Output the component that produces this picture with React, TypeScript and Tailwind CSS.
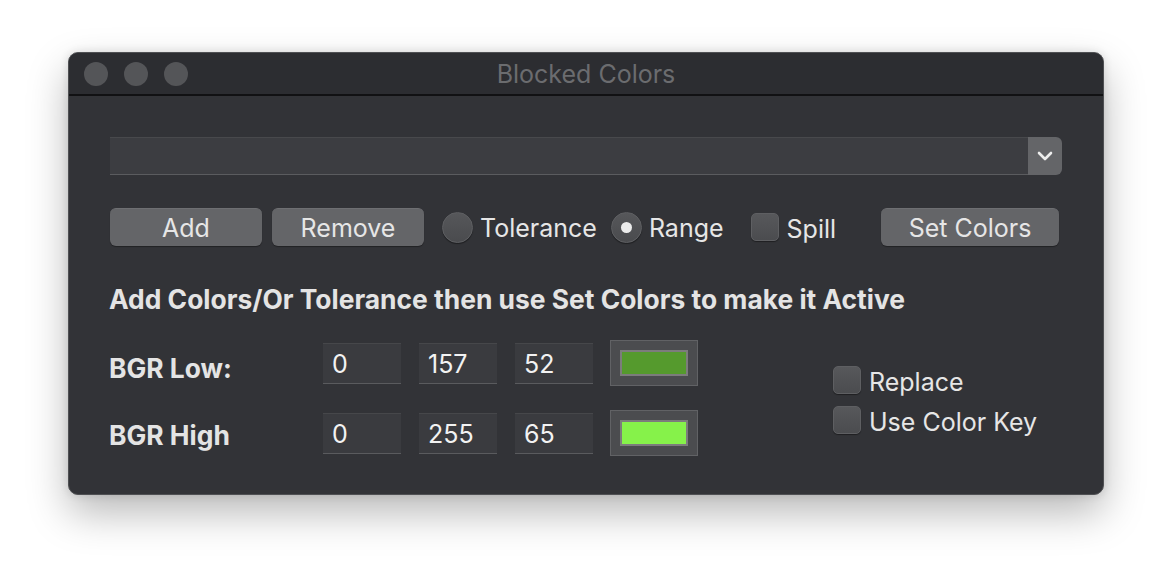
import React from "react";

const font = { fontFamily: "Inter, 'Noto Sans', 'Liberation Sans', sans-serif" };

function Button({ label, w }: { label: string; w: string }) {
  return (
    <div
      className={`${w} h-[38px] rounded-[6px] bg-[#646568] border-t border-[#6e6f72] shadow-[0_1px_1px_rgba(0,0,0,0.35)] flex items-center justify-center text-[25px] text-[#e6e6e6] leading-none`}
    >
      <span className="mt-[2px]">{label}</span>
    </div>
  );
}

function Radio({ checked }: { checked?: boolean }) {
  return (
    <div className="w-[31px] h-[31px] rounded-full bg-gradient-to-b from-[#56575a] to-[#4a4b4e] border border-[#5e5f62] shadow-[0_1px_1px_rgba(0,0,0,0.4)] flex items-center justify-center">
      {checked && <div className="w-[11px] h-[11px] rounded-full bg-[#ececec]" />}
    </div>
  );
}

function Check() {
  return (
    <div className="w-[28px] h-[28px] rounded-[5px] bg-gradient-to-b from-[#57585b] to-[#4b4c4f] border border-[#5e5f62] shadow-[0_1px_1px_rgba(0,0,0,0.4)]" />
  );
}

function Field({ v }: { v: string }) {
  return (
    <div className="w-[78px] h-[41px] bg-[#3a3b3f] border-t border-[#46474a] border-b border-b-[#5a5b5e] flex items-center pl-[9px] text-[25px] text-[#f2f2f2] leading-none">
      <span className="mt-[2px]">{v}</span>
    </div>
  );
}

function Well({ color }: { color: string }) {
  return (
    <div className="w-[88px] h-[46px] bg-[#4b4c4f] border border-[#616265] flex items-center justify-center">
      <div className={`w-[68px] h-[26px] border-2 border-[#7c7c7c] ${color}`} />
    </div>
  );
}

export default function App() {
  return (
    <div className="w-[1172px] h-[580px] bg-white relative overflow-hidden" style={font}>
      <div className="pt-[52px] pl-[68px]">
        <div className="w-[1036px] h-[443px] rounded-[10px] bg-[#323337] border border-[#4f5053] shadow-[0_18px_40px_rgba(0,0,0,0.28),0_0_10px_rgba(0,0,0,0.12)] overflow-hidden flex flex-col">
          {/* title bar */}
          <div className="h-[43px] bg-[#2c2d31] border-b-2 border-[#111113] flex items-center relative shrink-0">
            <div className="flex gap-[16px] pl-[15px]">
              <div className="w-[24px] h-[24px] rounded-full bg-[#545558]" />
              <div className="w-[24px] h-[24px] rounded-full bg-[#545558]" />
              <div className="w-[24px] h-[24px] rounded-full bg-[#545558]" />
            </div>
            <div className="absolute inset-0 flex items-center justify-center text-[25px] text-[#6b6c6f] pt-[2px] pointer-events-none">
              Blocked Colors
            </div>
          </div>

          {/* body */}
          <div className="pl-[41px] pr-[41px] pt-[41px] flex flex-col">
            {/* combo */}
            <div className="w-[952px] h-[38px] flex">
              <div className="flex-1 bg-[#3c3d41] border-t border-[#48494c] border-b border-b-[#5b5c5f]" />
              <div className="w-[34px] h-[38px] bg-[#646568] rounded-r-[6px] flex items-center justify-center">
                <svg width="16" height="10" viewBox="0 0 16 10">
                  <path d="M2 2 L8 8 L14 2" stroke="#ededed" strokeWidth="2.6" fill="none" strokeLinecap="round" strokeLinejoin="round" />
                </svg>
              </div>
            </div>

            {/* buttons row */}
            <div className="mt-[33px] h-[38px] flex items-center text-[25px] text-[#e6e6e6]">
              <Button label="Add" w="w-[152px]" />
              <div className="ml-[10px]"><Button label="Remove" w="w-[152px]" /></div>
              <div className="ml-[18px] flex items-center">
                <Radio />
                <span className="ml-[7px] mt-[3px]">Tolerance</span>
              </div>
              <div className="ml-[14px] flex items-center">
                <Radio checked />
                <span className="ml-[7px] mt-[3px]">Range</span>
              </div>
              <div className="ml-[27px] flex items-center">
                <Check />
                <span className="ml-[8px] mt-[6px]">Spill</span>
              </div>
              <div className="ml-[45px]"><Button label="Set Colors" w="w-[178px]" /></div>
            </div>

            {/* instruction */}
            <div className="mt-[40px] text-[26.4px] font-bold text-[#e4e4e4] leading-none -ml-[1px]">
              Add Colors/Or Tolerance then use Set Colors to make it Active
            </div>

            {/* bottom section */}
            <div className="mt-[28px] flex">
              <div className="flex flex-col gap-[24px]">
                <div className="flex items-center h-[46px]">
                  <div className="w-[214px] -ml-[1px] text-[26.4px] font-bold text-[#e4e4e4] leading-none mt-[10px]">BGR Low:</div>
                  <div className="flex gap-[18px] items-center">
                    <Field v="0" />
                    <Field v="157" />
                    <Field v="52" />
                  </div>
                  <div className="ml-[17px]"><Well color="bg-[#559a2d]" /></div>
                </div>
                <div className="flex items-center h-[46px]">
                  <div className="w-[214px] -ml-[1px] text-[26.4px] font-bold text-[#e4e4e4] leading-none mt-[3px]">BGR High</div>
                  <div className="flex gap-[18px] items-center">
                    <Field v="0" />
                    <Field v="255" />
                    <Field v="65" />
                  </div>
                  <div className="ml-[17px]"><Well color="bg-[#86f24a]" /></div>
                </div>
              </div>
              <div className="ml-[135px] pt-[26px] flex flex-col gap-[12px] text-[25px] text-[#e6e6e6] leading-[28px]">
                <div className="flex items-center h-[28px]">
                  <Check />
                  <span className="ml-[8px] mt-[3px]">Replace</span>
                </div>
                <div className="flex items-center h-[28px]">
                  <Check />
                  <span className="ml-[8px] mt-[3px]">Use Color Key</span>
                </div>
              </div>
            </div>
          </div>
        </div>
      </div>
    </div>
  );
}
